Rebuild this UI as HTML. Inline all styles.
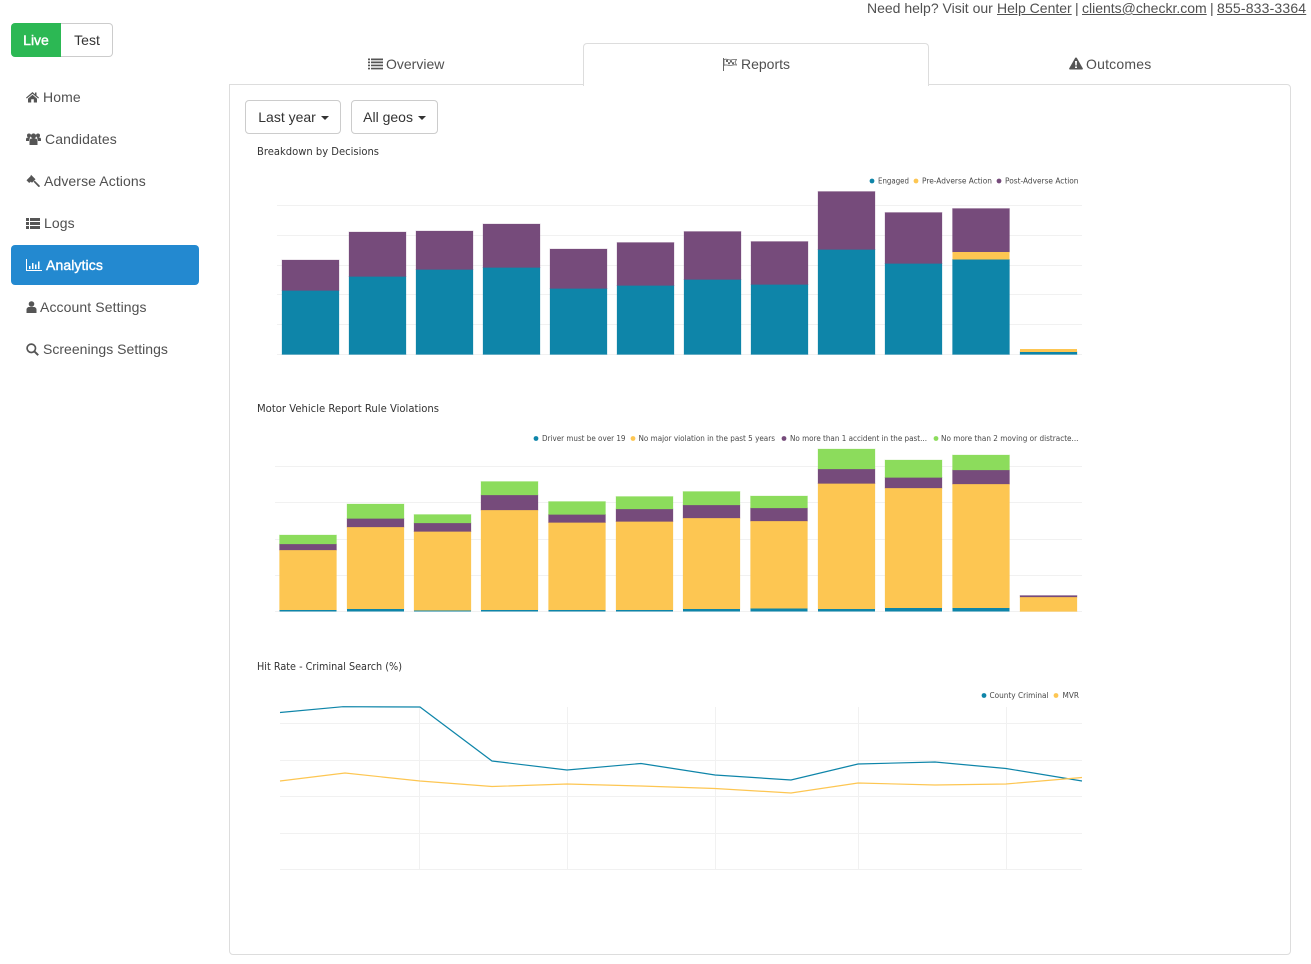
<!DOCTYPE html>
<html><head><meta charset="utf-8"><style>
html,body{margin:0;padding:0;background:#fff}
body{width:1311px;height:964px;position:relative;overflow:hidden;font-family:"Liberation Sans",sans-serif;font-size:14px;color:#555}
.a{position:absolute;white-space:nowrap;line-height:20px;top:-2px;color:#505050}
a{color:#505050;text-decoration:underline}
.nav{position:absolute;left:26px;white-space:nowrap;line-height:20px;color:#505050;letter-spacing:.1px}
.nav svg,.tab svg{position:absolute}
.tab{position:absolute;white-space:nowrap;line-height:20px;color:#505050;top:54px}
.btn{position:absolute;top:100px;height:32px;border:1px solid #ccc;border-radius:4px;line-height:32px;color:#333;box-sizing:content-box;text-align:center}
.caret{display:inline-block;width:0;height:0;border-left:4px solid transparent;border-right:4px solid transparent;border-top:4px solid #333;vertical-align:middle;margin-left:1px}
</style></head><body>
<div class="a" style="left:867px">Need help? Visit our</div>
<div class="a" style="left:997px"><a>Help Center</a></div>
<div class="a" style="left:1075px">|</div>
<div class="a" style="left:1082px"><a>clients@checkr.com</a></div>
<div class="a" style="left:1210px">|</div>
<div class="a" style="left:1217px"><a style="letter-spacing:.17px">855-833-3364</a></div>

<div style="position:absolute;left:11px;top:23px;width:50px;height:34px;background:#2cb854;border-radius:4px 0 0 4px;color:#fff;text-align:center;line-height:34px;-webkit-text-stroke:.4px #fff">Live</div>
<div style="position:absolute;left:61px;top:23px;height:32px;border:1px solid #ccc;border-left:0;border-radius:0 4px 4px 0;color:#333;text-align:center;line-height:32px;padding-left:1px;box-sizing:content-box;width:50px">Test</div>

<div style="position:absolute;left:11px;top:245px;width:188px;height:40px;background:#2389d0;border-radius:4px"></div>
<div class="nav" style="top:87px"><svg style="left:0;top:4px" width="13" height="12" viewBox="0 0 13 12"><path fill="#555" d="M6.5 1L0 6.6l.8.9L6.5 2.700l5.700 4.800.8-.9L10.500 4.500V1.500H9V3.200zM2 7.600V11.500H5.200V8.300H7.800V11.500H11V7.600L6.500 3.800z"/></svg><span style="margin-left:17px">Home</span></div>
<div class="nav" style="top:129px"><svg style="left:0;top:4px" width="15" height="12" viewBox="0 0 15 12"><g fill="#555"><circle cx="3" cy="2.500" r="2"/><circle cx="12" cy="2.500" r="2"/><circle cx="7.500" cy="3" r="2.600"/><path d="M0 8V6c0-1 1-1.500 2-1.500h2L3 8zM15 8V6c0-1-1-1.500-2-1.500h-2L12 8zM3.500 12V8c0-1.500 1-2.500 2-2.500h4c1 0 2 1 2 2.500v4z"/></g></svg><span style="margin-left:19px">Candidates</span></div>
<div class="nav" style="top:171px"><svg style="left:0;top:3px" width="14" height="14" viewBox="0 0 14 14"><g fill="#555"><path d="M5 .8L9.500 5.300 6 8.800 4.800 7.600 3.700 8.700 2.800 8.600.5 6.300 4.500 2.300z"/><path d="M7.500 7.800l1.200-1.200 4.900 4.900c.4.400.2.900-.1 1.200-.3.300-.9.400-1.200.1z"/></g></svg><span style="margin-left:18px">Adverse Actions</span></div>
<div class="nav" style="top:213px"><svg style="left:0;top:5px" width="14" height="11" viewBox="0 0 14 11"><path fill="#555" d="M0 0h3v3H0zM4 0h10v3H4zM0 4h3v3H0zM4 4h10v3H4zM0 8h3v3H0zM4 8h10v3H4z"/></svg><span style="margin-left:18px">Logs</span></div>
<div class="nav" style="top:255px;color:#fff;-webkit-text-stroke:.4px #fff"><svg style="left:0;top:4px" width="16" height="12" viewBox="0 0 16 12"><path fill="#fff" stroke="none" d="M0 0h1v11h15v1H0zM3 7h1.500v3H3zM6 4h1.500v6H6zM9 5.500h1.500V10H9zM12 2.500h1.500V10H12z"/></svg><span style="margin-left:20px">Analytics</span></div>
<div class="nav" style="top:297px"><svg style="left:0;top:4px" width="11" height="12" viewBox="0 0 11 12"><g fill="#555"><circle cx="5.500" cy="3" r="2.800"/><path d="M.5 12V8.500C.5 7 2 6 3 6h5c1 0 2.500 1 2.500 2.500V12z"/></g></svg><span style="margin-left:14px">Account Settings</span></div>
<div class="nav" style="top:339px;letter-spacing:.02px"><svg style="left:0;top:4px" width="13" height="13" viewBox="0 0 13 13"><g fill="none" stroke="#555"><circle cx="5.300" cy="5.300" r="4.200" stroke-width="1.700"/><path d="M8.300 8.300L12.200 12.200" stroke-width="2"/></g></svg><span style="margin-left:17px">Screenings Settings</span></div>

<div style="position:absolute;left:229px;top:84px;width:1060px;height:869px;border:1px solid #ddd;border-radius:0 4px 4px 4px"></div>
<div style="position:absolute;left:583px;top:43px;width:344px;height:42px;background:#fff;border:1px solid #ddd;border-bottom:0;border-radius:4px 4px 0 0"></div>

<div class="tab" style="left:368px"><svg style="left:0;top:4px" width="15" height="12" viewBox="0 0 15 12"><path fill="#555" d="M0 .5h2v1.700H0zM3 .5h12v1.700H3zM0 3.500h2v1.700H0zM3 3.500h12v1.700H3zM0 6.600h2v1.700H0zM3 6.600h12v1.700H3zM0 9.700h2v1.700H0zM3 9.700h12v1.700H3z"/></svg><span style="margin-left:18px">Overview</span></div>
<div class="tab" style="left:723px"><svg style="left:0;top:4px" width="14" height="13" viewBox="0 0 14 13"><g fill="none" stroke="#666"><path d="M.5 0V13" stroke-width="1"/><path d="M1 1.500C4 .3 6 2.700 9 1.800c2-.6 3-.5 4.500-.3L12 4l1.500 3c-2-.4-3-.2-4.500.3-3 1-5-1.300-8 0z" stroke-width=".8"/></g><path fill="#666" d="M3 2h2v2H3zM7 2.500h2v2H7zM5 4.300h2v2H5zM9 4.300h2v2H9z"/></svg><span style="margin-left:18px">Reports</span></div>
<div class="tab" style="left:1069px;letter-spacing:.2px"><svg style="left:0;top:3px" width="14" height="13" viewBox="0 0 14 13"><path fill="#555" fill-rule="evenodd" d="M7 .5c.4 0 .7.200.9.500l5.900 10.400c.3.600-.1 1.100-.7 1.100H.9c-.6 0-1-.5-.7-1.100L6.100 1c.2-.3.500-.5.900-.5zM6 4l.3 4.500h1.400L8 4zM6 9.500V11h2V9.500z"/></svg><span style="margin-left:17px">Outcomes</span></div>

<div class="btn" style="left:245px;width:94px;padding-left:0"><span style="position:relative;left:.5px">Last year <span class="caret"></span></span></div>
<div class="btn" style="left:351px;width:85px">All geos <span class="caret"></span></div>

<svg style="position:absolute;left:0;top:0" width="1311" height="964" viewBox="0 0 1311 964">
<g font-family="'DejaVu Sans',sans-serif" font-size="10.500" fill="#333">
<text x="257" y="155" textLength="122" lengthAdjust="spacingAndGlyphs">Breakdown by Decisions</text>
<text x="257" y="412" textLength="182" lengthAdjust="spacingAndGlyphs">Motor Vehicle Report Rule Violations</text>
<text x="257" y="670" textLength="145" lengthAdjust="spacingAndGlyphs">Hit Rate - Criminal Search (%)</text>
</g>
<g font-family="'DejaVu Sans',sans-serif" font-size="8" fill="#484848">
<text x="878" y="183.500" textLength="31" lengthAdjust="spacingAndGlyphs">Engaged</text>
<text x="922" y="183.500" textLength="70" lengthAdjust="spacingAndGlyphs">Pre-Adverse Action</text>
<text x="1005" y="183.500" textLength="73.500" lengthAdjust="spacingAndGlyphs">Post-Adverse Action</text>
<text x="542" y="441" textLength="83.500" lengthAdjust="spacingAndGlyphs">Driver must be over 19</text>
<text x="638.500" y="441" textLength="136.500" lengthAdjust="spacingAndGlyphs">No major violation in the past 5 years</text>
<text x="790" y="441" textLength="137" lengthAdjust="spacingAndGlyphs">No more than 1 accident in the past...</text>
<text x="941" y="441" textLength="137.500" lengthAdjust="spacingAndGlyphs">No more than 2 moving or distracte...</text>
<text x="989.500" y="698" textLength="59" lengthAdjust="spacingAndGlyphs">County Criminal</text>
<text x="1062.500" y="698" textLength="16.500" lengthAdjust="spacingAndGlyphs">MVR</text>
</g>
<g>
<circle cx="872" cy="181" r="2.400" fill="#0e85a9"/><circle cx="916" cy="181" r="2.400" fill="#fdc652"/><circle cx="999" cy="181" r="2.400" fill="#764b7b"/>
<circle cx="536" cy="438.500" r="2.400" fill="#0e85a9"/><circle cx="633" cy="438.500" r="2.400" fill="#fdc652"/><circle cx="784" cy="438.500" r="2.400" fill="#764b7b"/><circle cx="936" cy="438.500" r="2.400" fill="#8cdc5c"/>
<circle cx="984" cy="695.500" r="2.400" fill="#0e85a9"/><circle cx="1056" cy="695.500" r="2.400" fill="#fdc652"/>
</g>

<path stroke="#f1f1f1" stroke-width="1" fill="none" d="M277 205.500H1082M277 235.500H1082M277 265.500H1082M277 294.500H1082M277 324.500H1082M277 354.500H1082M275 466.500H1082M275 502.500H1082M275 539.500H1082M275 575.500H1082M275 611.500H1082M280 723.500H1082M280 760.500H1082M280 796.500H1082M280 833.500H1082M280 869.500H1082M419.500 707V869M567.500 707V869M715.500 707V869M858.500 707V869M1006.500 707V869"/>

<path fill="#0e85a9" stroke="#0e85a9" stroke-opacity=".25" d="M282 290.500h57v64h-57zM349 276.500h57v78h-57zM416 269.500h57v85h-57zM483 267.500h57v87h-57zM550 288.500h57v66h-57zM617 285.500h57v69h-57zM684 279.500h57v75h-57zM751 284.500h57v70h-57zM818 249.500h57v105h-57zM885 263.500h57v91h-57zM952.500 259.500h57v95h-57zM1020 352h57v2.500h-57z"/>
<path fill="#764b7b" stroke="#764b7b" stroke-opacity=".25" d="M282 260h57v30.500h-57zM349 232h57v44.500h-57zM416 231h57v38.500h-57zM483 224h57v43.500h-57zM550 249h57v39.500h-57zM617 242.500h57v43h-57zM684 231.500h57v48h-57zM751 241.500h57v43h-57zM818 191.500h57v58h-57zM885 212.500h57v51h-57zM952.500 208.500h57v43.500h-57z"/>
<path fill="#fdc652" d="M952.500 252h57v7.500h-57zM1020 349h57v3h-57z"/>

<path fill="#fdc652" stroke="#fdc652" stroke-opacity=".25" d="M279.500 550h57v60h-57zM347 527h57v82h-57zM414 531.500h57v79h-57zM481 510h57v100h-57zM548.500 522.500h57v87.500h-57zM616 521.500h57v88.500h-57zM683 518h57v91h-57zM750.500 521h57v87.500h-57zM818 483.500h57v125.500h-57zM885 488h57v120h-57zM952.500 484h57v124h-57zM1020 597h57v14.500h-57z"/>
<path fill="#0e85a9" d="M279.500 610h57v1.500h-57zM347 609h57v2.500h-57zM414 610.500h57v1h-57zM481 610h57v1.500h-57zM548.500 610h57v1.500h-57zM616 610h57v1.500h-57zM683 609h57v2.500h-57zM750.500 608.500h57v3h-57zM818 609h57v2.500h-57zM885 608h57v3.500h-57zM952.500 608h57v3.500h-57z"/>
<path fill="#764b7b" stroke="#764b7b" stroke-opacity=".25" d="M279.500 544h57v6h-57zM347 518.500h57v8.500h-57zM414 523h57v8.500h-57zM481 495h57v15h-57zM548.500 514.500h57v8h-57zM616 509h57v12.500h-57zM683 505h57v13h-57zM750.500 508h57v13h-57zM818 469h57v14.500h-57zM885 477.500h57v10.500h-57zM952.500 470h57v14h-57zM1020 595.500h57v1.500h-57z"/>
<path fill="#8cdc5c" stroke="#8cdc5c" stroke-opacity=".25" d="M279.500 535h57v9h-57zM347 504h57v14.500h-57zM414 514.500h57v8.500h-57zM481 481.500h57v13.500h-57zM548.500 501.500h57v13h-57zM616 496.500h57v12.500h-57zM683 491.500h57v13.500h-57zM750.500 496h57v12h-57zM818 449h57v20h-57zM885 460h57v17.500h-57zM952.500 455h57v15h-57z"/>

<polyline fill="none" stroke="#0e85a9" stroke-width="1.200" points="280,712.500 343,706.700 420,707 492,761 567,770 641,763.500 715,775 791,780 858,764 935,762 1006,768.500 1082,781"/>
<polyline fill="none" stroke="#fdc652" stroke-width="1.200" points="280,781 345,773 420,781 492,786.500 567,784 641,786 715,788.500 791,793 858,783 935,785 1006,784 1082,777.500"/>
</svg>
</body></html>
